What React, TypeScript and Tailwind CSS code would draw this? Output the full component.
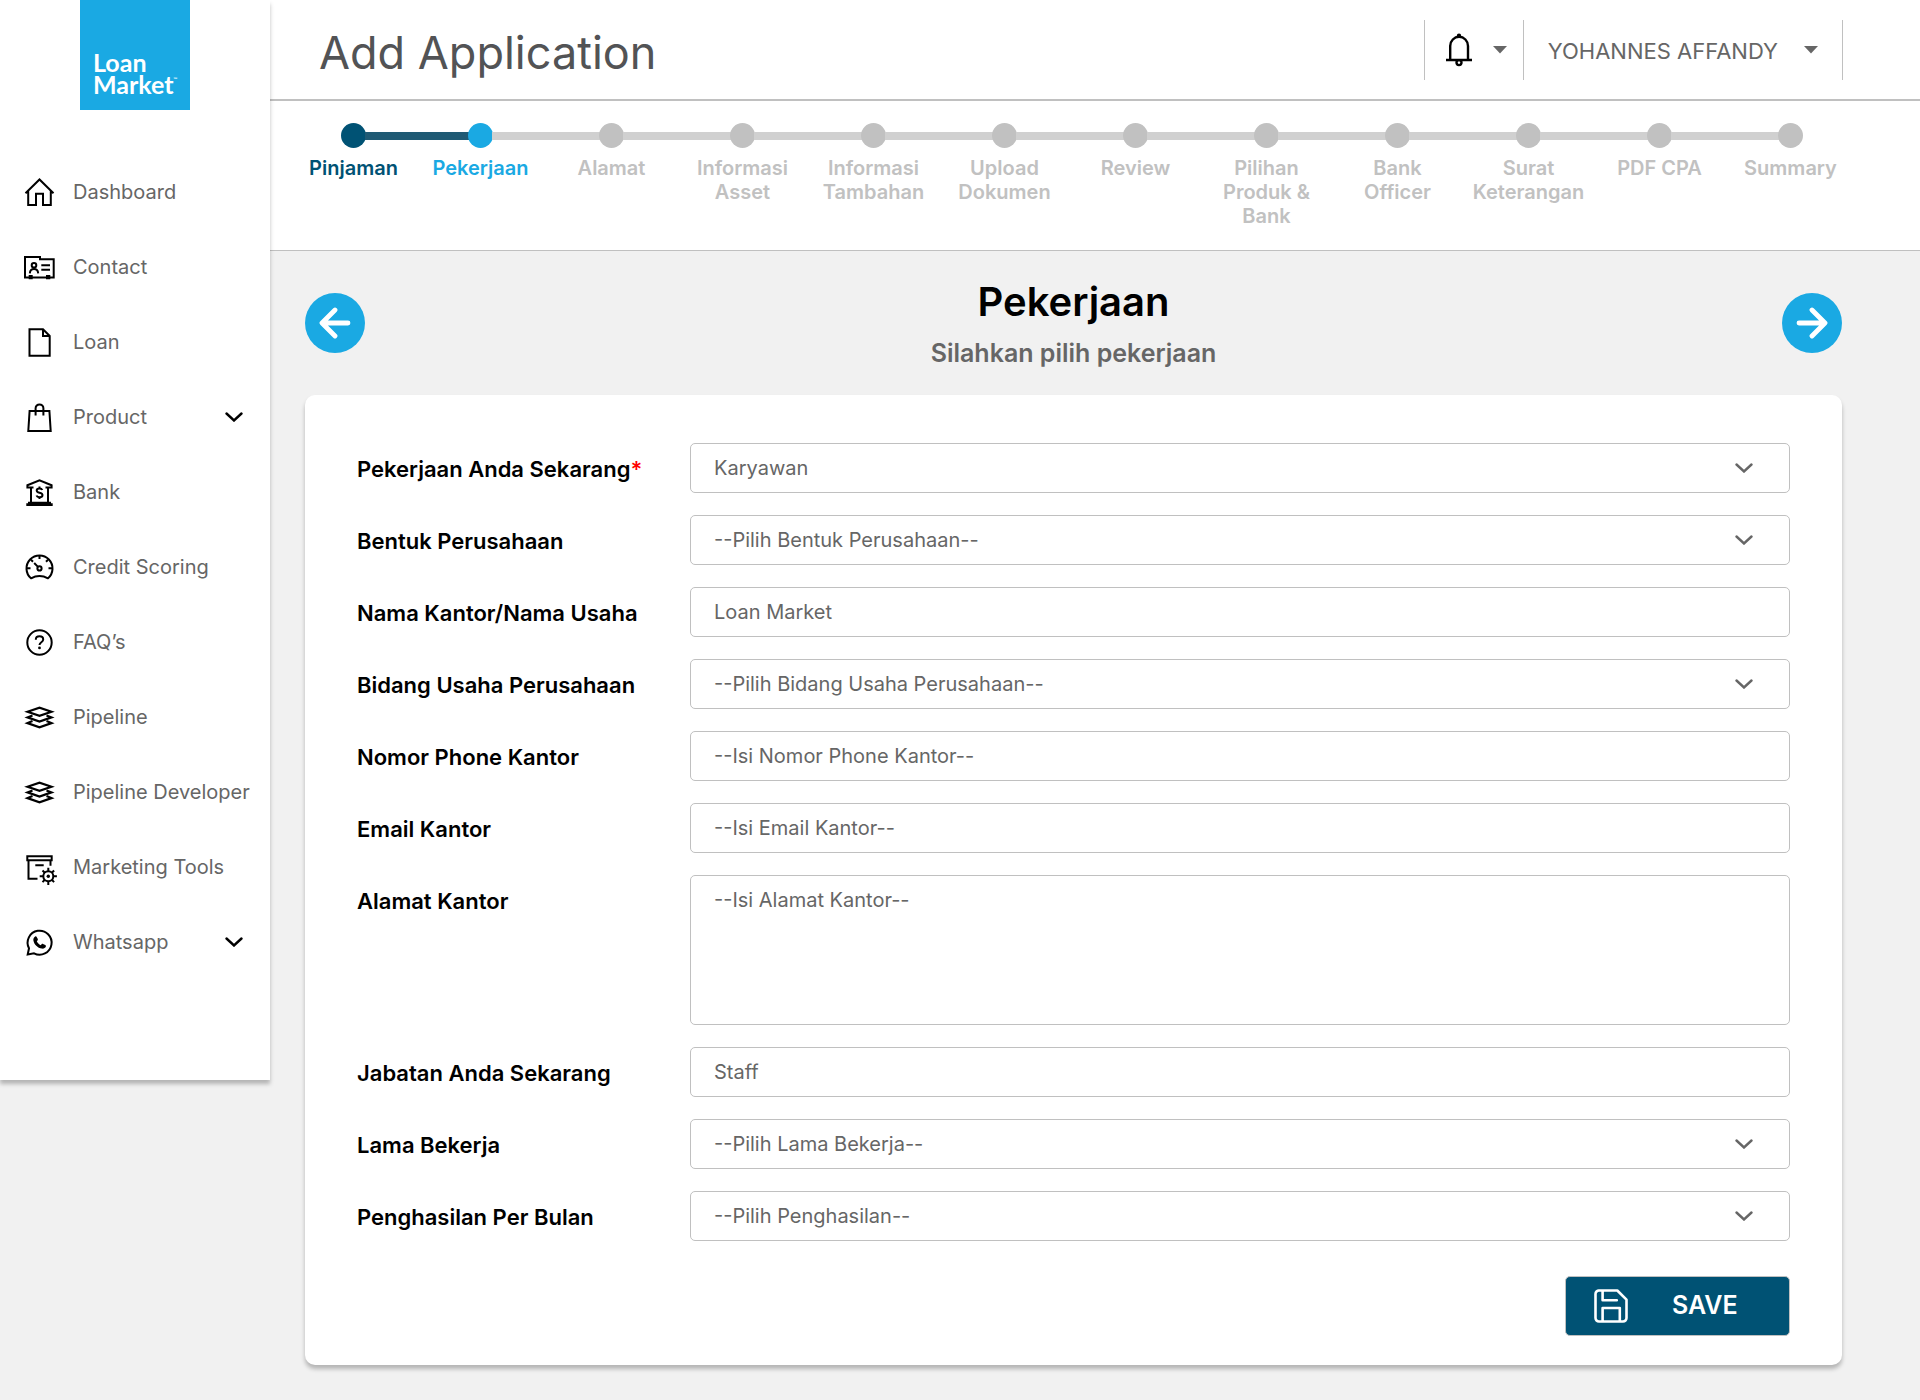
import type { ReactNode } from "react";

type NavItem = { label: string; icon: ReactNode; expandable?: boolean };

function Icon({ children }: { children: ReactNode }) {
  return (
    <svg viewBox="0 0 32 32" className="size-8 shrink-0" fill="none" stroke="#000" strokeWidth="2" aria-hidden="true">
      {children}
    </svg>
  );
}

const layersIcon = (
  <Icon>
    <path d="M4.5 10.7 16.5 6.6l12 4.1-12 4.2z" strokeWidth="2.2" />
    <path d="M9.5 14.4 4.5 16.4l12 4.2 12-4.2-5-2" strokeWidth="2.2" />
    <path d="M9.5 20.1 4.5 22.1l12 4.2 12-4.2-5-2" strokeWidth="2.2" />
  </Icon>
);

const navItems: NavItem[] = [
  {
    label: "Dashboard",
    icon: (
      <Icon>
        <path d="M2.5 17.2 16.5 3.5l14 13.7M5.2 15v14H13V17.8h7V29h7.8V15" />
      </Icon>
    ),
  },
  {
    label: "Contact",
    icon: (
      <Icon>
        <path d="M2 6h15v2.2h13.7v18.3H2z" />
        <circle cx="11" cy="14.2" r="2.3" />
        <path d="M6.8 22.3c.3-2.6 1.8-4.2 4.2-4.2s3.9 1.6 4.2 4.2M18.3 14.2h8.7M18.3 18.7h8.7" />
        <path d="M5.7 24h4v4.3h-4zM23 24h4.3v4.3H23z" fill="#000" stroke="none" />
      </Icon>
    ),
  },
  {
    label: "Loan",
    icon: (
      <Icon>
        <path d="M6.5 3.3h13.5l6.7 6.7v19.7H6.5zM20 3.3V10h6.7" />
      </Icon>
    ),
  },
  {
    label: "Product",
    expandable: true,
    icon: (
      <Icon>
        <path d="M6.6 10h19.8l1.3 20H5.3zM12.6 14.5V7.3a3.9 3.9 0 0 1 7.8 0v7.2" />
      </Icon>
    ),
  },
  {
    label: "Bank",
    icon: (
      <Icon>
        <path d="M10.5 11.5H4.4V9.2l12.1-4.9 12.1 4.9v2.3h-6.1M8 11.5V27M25 11.5V27" />
        <path d="M5 25.7h23V28H5zM3.3 27.3h26.4V30H3.3z" fill="#000" stroke="none" />
        <path d="M19.3 14c-.4-1-1.4-1.6-2.8-1.6-1.7 0-2.8.8-2.8 2.1 0 1.4 1.2 1.8 2.8 2.2s3 .9 3 2.3-1.2 2.2-3 2.2c-1.5 0-2.6-.6-3-1.7M16.5 10.5v2M16.5 21v2" />
      </Icon>
    ),
  },
  {
    label: "Credit Scoring",
    icon: (
      <Icon>
        <path d="M8 27.3a13 13 0 1 1 17 0c-5.4-3-11.6-3-17 0z" strokeLinejoin="round" />
        <circle cx="16.5" cy="17.4" r="2.1" />
        <path d="M15 15.9 11.2 12M16.5 4v4M4 17.3h3.5M25.5 17.3H29M8 8.8l2 2M25 8.8l-2 2" />
      </Icon>
    ),
  },
  {
    label: "FAQ’s",
    icon: (
      <Icon>
        <circle cx="16.5" cy="16.5" r="12.2" />
        <path d="M12.8 13.7c0-2.1 1.5-3.4 3.7-3.4s3.7 1.3 3.7 3.2c0 2.7-3.7 2.7-3.7 5.5" />
        <circle cx="16.5" cy="21.9" r="1.4" fill="#000" stroke="none" />
      </Icon>
    ),
  },
  { label: "Pipeline", icon: layersIcon },
  { label: "Pipeline Developer", icon: layersIcon },
  {
    label: "Marketing Tools",
    icon: (
      <svg viewBox="0 0 36 32" className="-mr-1 h-8 w-9 shrink-0 overflow-visible" fill="none" stroke="#000" strokeWidth="2" aria-hidden="true">
        <path d="M4.3 5.3h24.4v4H4.3zM5.5 9.3v18.4h9M27.5 9.3v5.5M12.3 14.3h8.4" />
        <circle cx="25.3" cy="25.3" r="5" />
        <circle cx="25.3" cy="25.3" r="1.7" fill="#000" stroke="none" />
        <path d="M25.3 20.3v-3.6M25.3 30.3v3.6M20.3 25.3h-3.600M30.3 25.3h3.6M21.8 21.8l-2.300-2.300M28.8 21.8l2.300-2.300M21.8 28.8l-2.300 2.300M28.8 28.8l2.300 2.300" />
      </svg>
    ),
  },
  {
    label: "Whatsapp",
    expandable: true,
    icon: (
      <Icon>
        <path d="M4.7 28.5 6 22.300A12 12 0 1 1 11 27.300z" />
        <path
          d="M12.200 10.400c.6-.3 1.200-.1 1.500.5l1.100 2.200c.2.500.1 1-.3 1.400l-.7.800c.8 1.700 2.100 3 3.900 3.900l.9-1c.4-.4.900-.5 1.400-.3l2.300 1.100c.6.300.8.900.6 1.500-.7 1.600-2.300 2.400-4 2.100-4.400-.8-7.700-4-8.500-8.200-.3-1.700.4-3.200 1.800-4z"
          fill="#000"
          stroke="none"
        />
      </Icon>
    ),
  },
];

const steps = [
  "Pinjaman",
  "Pekerjaan",
  "Alamat",
  "Informasi Asset",
  "Informasi Tambahan",
  "Upload Dokumen",
  "Review",
  "Pilihan Produk & Bank",
  "Bank Officer",
  "Surat Keterangan",
  "PDF CPA",
  "Summary",
];
const currentStep = 1;

type Field = {
  id: string;
  label: string;
  kind: "select" | "text" | "textarea";
  value?: string;
  placeholder?: string;
  required?: boolean;
};

const fields: Field[] = [
  { id: "pekerjaan", label: "Pekerjaan Anda Sekarang", kind: "select", value: "Karyawan", required: true },
  { id: "bentuk", label: "Bentuk Perusahaan", kind: "select", value: "--Pilih Bentuk Perusahaan--" },
  { id: "nama", label: "Nama Kantor/Nama Usaha", kind: "text", value: "Loan Market" },
  { id: "bidang", label: "Bidang Usaha Perusahaan", kind: "select", value: "--Pilih Bidang Usaha Perusahaan--" },
  { id: "phone", label: "Nomor Phone Kantor", kind: "text", placeholder: "--Isi Nomor Phone Kantor--" },
  { id: "email", label: "Email Kantor", kind: "text", placeholder: "--Isi Email Kantor--" },
  { id: "alamat", label: "Alamat Kantor", kind: "textarea", placeholder: "--Isi Alamat Kantor--" },
  { id: "jabatan", label: "Jabatan Anda Sekarang", kind: "text", value: "Staff" },
  { id: "lama", label: "Lama Bekerja", kind: "select", value: "--Pilih Lama Bekerja--" },
  { id: "penghasilan", label: "Penghasilan Per Bulan", kind: "select", value: "--Pilih Penghasilan--" },
];

function Chevron({ className }: { className: string }) {
  return (
    <svg viewBox="0 0 18 10" className={className} fill="none" stroke="currentColor" strokeWidth="2.4" strokeLinecap="round" aria-hidden="true">
      <path d="M1.5 1.5 9 8.5l7.5-7" />
    </svg>
  );
}

function Caret() {
  return (
    <svg viewBox="0 0 14 8" className="h-2 w-3.5 shrink-0" fill="#666" aria-hidden="true">
      <path d="M0 0h14L7 7.5z" />
    </svg>
  );
}

function Sidebar() {
  return (
    <aside className="relative z-10 w-[270px] shrink-0 self-start bg-white pb-[101px] shadow-[0_4px_4px_rgba(0,0,0,0.25)]">
      <a
        href="#"
        className="ml-20 flex size-[110px] flex-col justify-end bg-[#1aa9e3] pb-[15px] pl-[13px] font-['Lato',sans-serif] text-[25px] leading-[22px] font-bold text-white"
      >
        <span>Loan</span>
        <span className="flex">
          Market<span className="text-[5px] leading-[12px]">™</span>
        </span>
      </a>
      <nav className="mt-11">
        <ul>
          {navItems.map((item) => (
            <li key={item.label}>
              <a href="#" className="flex h-[75px] items-center pr-[27px] pl-[23px] text-xl text-[#666]">
                {item.icon}
                <span className="ml-[18px] whitespace-nowrap">{item.label}</span>
                {item.expandable && <Chevron className="ml-auto h-2.5 w-[18px] text-black" />}
              </a>
            </li>
          ))}
        </ul>
      </nav>
    </aside>
  );
}

function Header() {
  return (
    <header className="flex items-start justify-between border-b-2 border-[#c0c0c0] bg-white pt-5 pr-[77px] pb-[19px] pl-[49px]">
      <h1 className="pt-1.5 text-[45px] leading-[54px] text-[#525355]">Add Application</h1>
      <div className="flex h-[60px] divide-x divide-[#c0c0c0] border-x border-[#c0c0c0]">
        <button type="button" aria-label="Notifications" className="flex items-center gap-[19px] pr-4 pl-[19px]">
          <svg viewBox="0 0 30 36" className="h-9 w-[30px]" fill="none" stroke="#000" strokeWidth="2.4" aria-hidden="true">
            <path d="M6.2 28V14a8.9 9.2 0 0 1 17.800 0v14M2 28h26" />
            <circle cx="15" cy="3.8" r="2.2" fill="#000" stroke="none" />
            <circle cx="15" cy="30.6" r="2.5" />
          </svg>
          <Caret />
        </button>
        <button type="button" className="flex items-center gap-[26px] px-6 text-[22px] text-[#666]">
          <span className="pt-0.5">YOHANNES AFFANDY</span>
          <Caret />
        </button>
      </div>
    </header>
  );
}

function Stepper() {
  return (
    <nav aria-label="Progress" className="border-b border-[#c0c0c0] bg-white pt-[22px] pr-16 pb-[22px] pl-[22px]">
      <ol className="grid grid-cols-[123fr_repeat(11,131fr)]">
        {steps.map((step, i) => {
          const done = i < currentStep;
          const current = i === currentStep;
          const tone = done ? "text-[#005274]" : current ? "text-[#1aa9e3]" : "text-[#c1c1c1]";
          const before = i === 0 ? "" : i <= currentStep ? "bg-[#1f5a74]" : "bg-[#d0d0d0]";
          const after = i === steps.length - 1 ? "" : done ? "bg-[#1f5a74]" : "bg-[#d0d0d0]";
          return (
            <li key={step} className={`flex flex-col ${tone}`}>
              <div className="flex items-center">
                <span className={`h-2 flex-1 ${before}`} />
                <span className="-mx-px size-[25px] rounded-full bg-current" />
                <span className={`h-2 flex-1 ${after}`} />
              </div>
              <a href="#" className="mx-auto mt-2 min-h-[72px] w-[120px] text-center text-xl leading-6 font-semibold">
                {step}
              </a>
            </li>
          );
        })}
      </ol>
    </nav>
  );
}

function ArrowButton({ label, path }: { label: string; path: string }) {
  return (
    <button type="button" aria-label={label} className="flex size-[60px] items-center justify-center rounded-full bg-[#1aa9e3]">
      <svg viewBox="0 0 32 32" className="size-8" fill="none" stroke="#fff" strokeWidth="4.8" strokeLinecap="round" strokeLinejoin="round" aria-hidden="true">
        <path d={path} />
      </svg>
    </button>
  );
}

const boxClass = "block w-full rounded-[5px] border border-[#c0c0c0] bg-white pl-[23px] text-xl leading-6 text-[#666] placeholder:text-[#666] placeholder:opacity-100";

function FieldControl({ field }: { field: Field }) {
  if (field.kind === "select") {
    return (
      <div className="relative">
        <select id={field.id} className={`${boxClass} h-[50px] appearance-none pr-16`}>
          <option>{field.value}</option>
        </select>
        <Chevron className="pointer-events-none absolute top-5 right-[37px] h-2.5 w-[18px] text-[#666]" />
      </div>
    );
  }
  if (field.kind === "textarea") {
    return <textarea id={field.id} placeholder={field.placeholder} className={`${boxClass} h-[150px] resize-none pt-3 pr-6`} />;
  }
  return <input id={field.id} type="text" defaultValue={field.value} placeholder={field.placeholder} className={`${boxClass} h-[50px] pr-6`} />;
}

export default function App() {
  return (
    <div className="flex min-h-screen bg-[#f1f1f1] font-['Inter',sans-serif]">
      <Sidebar />
      <div className="min-w-0 flex-1">
        <Header />
        <Stepper />
        <main className="pt-[27px] pr-[78px] pb-[35px] pl-[35px]">
          <div className="flex items-center justify-between">
            <ArrowButton label="Previous" path="M29 16H4M16 3 3 16l13 13" />
            <div className="text-center font-semibold">
              <h2 className="text-[40px] leading-[48px] text-black">Pekerjaan</h2>
              <p className="mt-3 text-[25px] leading-[30px] text-[#666]">Silahkan pilih pekerjaan</p>
            </div>
            <ArrowButton label="Next" path="M3 16h25M16 3l13 13-13 13" />
          </div>
          <form className="mt-[27px] rounded-[10px] bg-white px-[52px] pt-12 pb-[29px] shadow-[0_4px_4px_rgba(0,0,0,0.25)]">
            <div className="flex flex-col gap-[22px]">
              {fields.map((field) => (
                <div key={field.id} className="grid grid-cols-[333px_1fr]">
                  <label htmlFor={field.id} className="pt-3.5 text-[22px] leading-6 font-semibold text-black">
                    {field.label}
                    {field.required && <span className="text-[#ff0000]">*</span>}
                  </label>
                  <FieldControl field={field} />
                </div>
              ))}
            </div>
            <div className="mt-[35px] flex justify-end">
              <button
                type="button"
                className="flex h-[60px] w-[225px] items-center rounded-[5px] border border-[#c0c0c0] bg-[#005274] pl-7 text-[25px] font-semibold text-white"
              >
                <svg viewBox="0 0 34 34" className="size-[34px]" fill="none" stroke="#fff" strokeWidth="2.6" strokeLinejoin="round" strokeLinecap="round" aria-hidden="true">
                  <path d="M4.5 1.5h18.800l9.200 9.200V29a3.500 3.500 0 0 1-3.500 3.500H5A3.500 3.500 0 0 1 1.500 29V5A3.500 3.500 0 0 1 5 1.500M8.600 1.500v9.700h14.200M8.600 32.500V19h17.200v13.500" />
                </svg>
                <span className="ml-11">SAVE</span>
              </button>
            </div>
          </form>
        </main>
      </div>
    </div>
  );
}
